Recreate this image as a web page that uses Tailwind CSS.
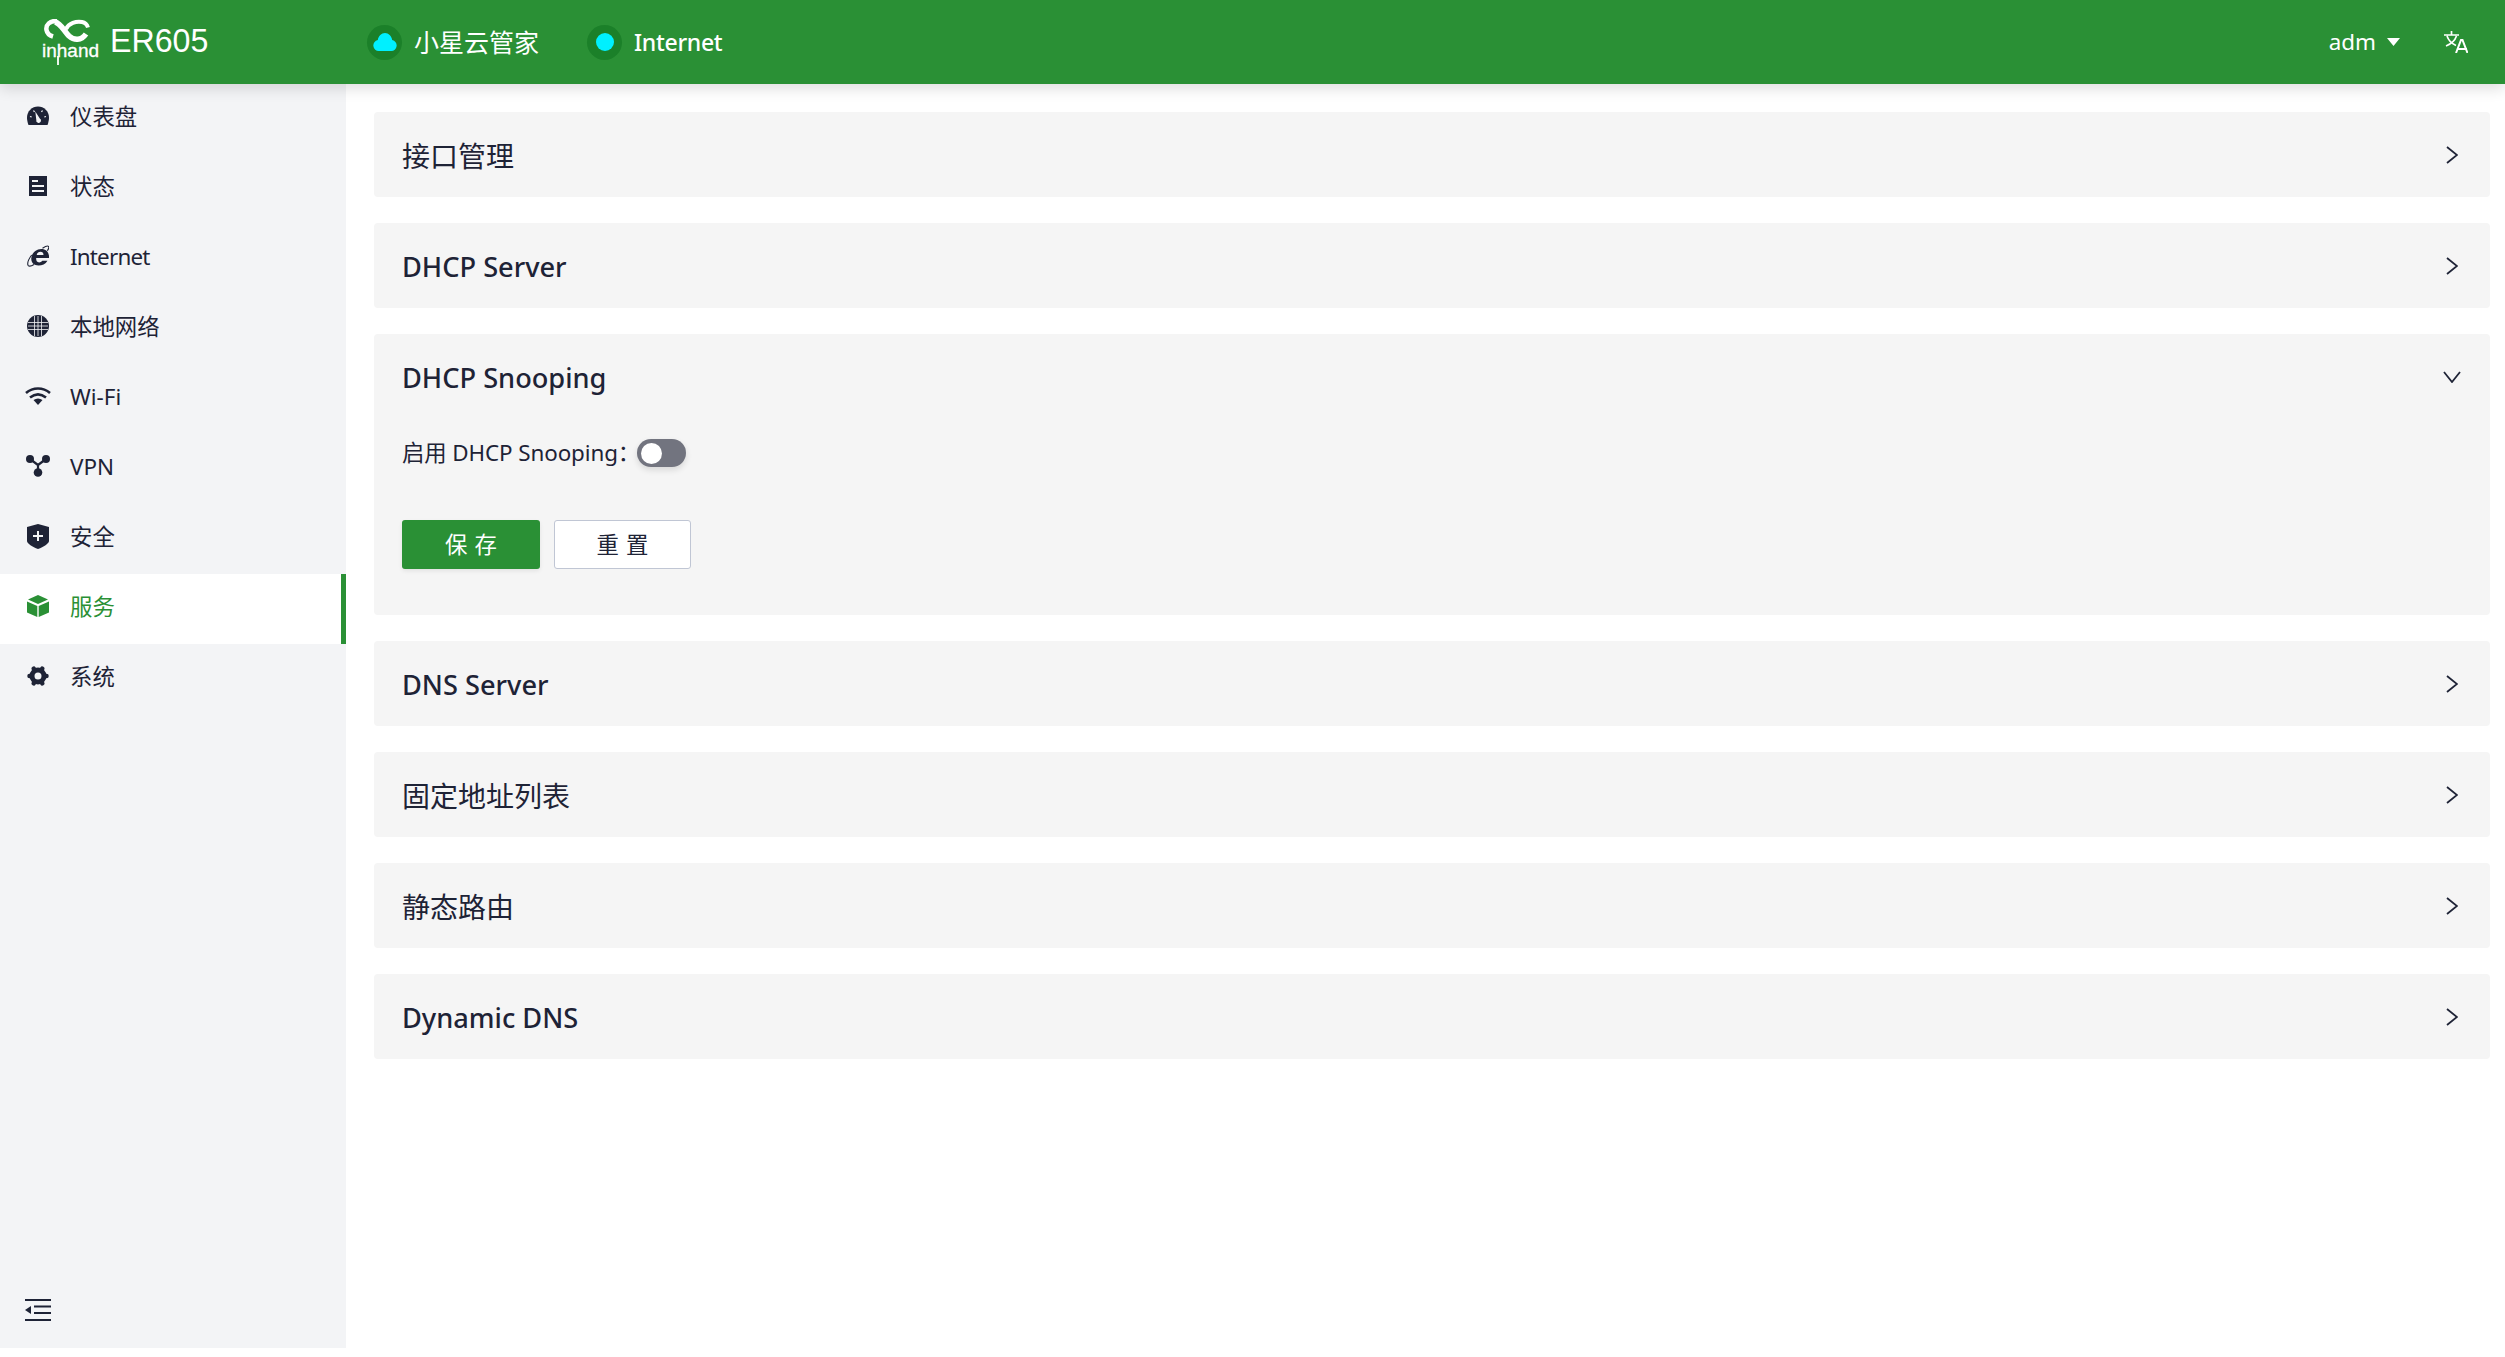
<!DOCTYPE html>
<html lang="zh">

<head>
    <meta charset="UTF-8">
    <title>ER605</title>
    <script src="https://cdn.jsdelivr.net/npm/@tailwindcss/browser@4"></script>
</head>

<body class="bg-white h-[1357px] overflow-hidden text-[#1e2336] font-['Noto_Sans','Noto_Sans_CJK_SC',sans-serif]">

    <!-- Header -->
    <header class="relative z-10 h-[84px] bg-[#2a9035] text-white flex items-center shadow-[0_4px_14px_rgba(0,0,0,0.14)]">
        <div class="w-[367px] pl-[42px] flex items-center shrink-0">
            <!-- Logo -->
            <svg class="w-[58px] h-[48px] mt-[2px]" viewBox="0 0 58 48" fill="none" stroke="currentColor">
                <path d="M15 2C8 1.500 3.500 6 4.500 11c.6 3.400 3.200 5.500 6.500 6.500" stroke-width="4.500" />
                <path d="M13 3c6 1.500 9 9 14 14 5 4.500 12 5 17-2" stroke-width="5.500" />
                <path d="M24 10c3-6 10-8 16-7 3 .6 5 2.400 6 5.500" stroke-width="4" />
                <text x="0" y="38" font-family="Liberation Sans" font-size="19" fill="currentColor" stroke="currentColor" stroke-width="0.300">inhand</text>
                <path d="M16 37v9" stroke-width="1.800" />
            </svg>
            <span class="text-[33.500px] leading-none font-['Liberation_Sans'] ml-[10px] -mt-[3px] inline-block origin-left scale-x-[0.96]">ER605</span>
        </div>

        <div class="flex items-center gap-[12px]">
            <span class="w-[35px] h-[35px] rounded-full bg-[#1b8029] flex items-center justify-center">
                <svg class="w-[24px] h-[18px]" viewBox="0 0 24 18" fill="#00f0ff"><path d="M6 18a5.500 5.500 0 0 1-1.200-10.900C5.500 3 8.400 0 12 0s6.500 3 7.200 7.100A5.500 5.500 0 0 1 18 18Z" /></svg>
            </span>
            <span class="text-[25px] leading-none">小星云管家</span>
        </div>
        <div class="flex items-center gap-[12px] ml-[48px]">
            <span class="w-[35px] h-[35px] rounded-full bg-[#1b8029] flex items-center justify-center">
                <span class="w-[18px] h-[18px] rounded-full bg-[#00f0ff]"></span>
            </span>
            <span class="text-[23px] leading-none font-medium tracking-[-0.3px]">Internet</span>
        </div>

        <div class="ml-auto flex items-center">
            <span class="text-[22.400px] leading-none">adm</span>
            <svg class="w-[13px] h-[8px] ml-[11px]" viewBox="0 0 13 8" fill="currentColor"><path d="M0 0h13L6.500 8Z" /></svg>
            <svg class="w-[24px] h-[22px] ml-[44px] mr-[37px]" viewBox="0 0 24 22" fill="none" stroke="currentColor" stroke-width="1.700">
                <path d="M0 4h15M7.500 0v4M3 5c1.500 4.500 4.500 7.500 9 9.500M12.500 5C11 9.500 7 13 2 15" />
                <path d="M12 22l5-13h1.500l5 13M14 18h9" stroke-width="2" />
            </svg>
        </div>
    </header>

    <div class="flex">
        <!-- Sidebar -->
        <aside class="w-[346px] h-[1264px] bg-[#f3f4f6] flex flex-col shrink-0">
            <nav class="text-[22.400px]">
                <a class="h-[70px] pb-[4px] flex items-center pl-[27px] gap-[21px]">
                    <svg class="w-[22px] h-[22px] -translate-y-px" viewBox="0 0 22 22"><path fill="#1e2336" d="M11 1.500C5 1.500 0 6.300 0 12.500c0 2.500.6 5 1.500 7.500h19c.9-2.500 1.500-5 1.500-7.500C22 6.300 17 1.500 11 1.500Z" /><path stroke="#f3f4f6" stroke-width="1.300" d="M6.500 5.500l1 1.500M15.500 5.500l-1 1.500M3 11.500l1.700.5M19 11.500l-1.700.5" /><path fill="#f3f4f6" d="M8.300 6.500l4.500 7a2.400 2.400 0 1 1-3.500 1.500Z" /></svg>
                    <span>仪表盘</span>
                </a>
                <a class="h-[70px] pb-[4px] flex items-center pl-[29px] gap-[23px]">
                    <svg class="w-[18px] h-[20px] -translate-y-px" viewBox="0 0 18 20"><path fill="#1e2336" d="M0 0h18v20H0Z" /><path stroke="#f3f4f6" stroke-width="2" d="M3 5h6M3 10h12M3 15h12" /></svg>
                    <span>状态</span>
                </a>
                <a class="h-[70px] pb-[4px] flex items-center pl-[27px] gap-[21px]">
                    <svg class="w-[22px] h-[22px] -translate-y-px" viewBox="0 0 22 22" fill="none"><path fill="#1e2336" d="M22 13c.5-5.500-3-9-7.800-9C9.200 4 4.800 8 4.300 13c-.4 4.500 2.700 7.500 7.200 7.500 3.700 0 7-1.500 9-4.800h-5.200c-.9 1.200-2 1.700-3.200 1.700-2 0-3.200-1.500-2.900-4.400ZM9.700 10c.4-2 2-3.200 3.800-3.200s3 1.200 3 3.200Z" /><path stroke="#1e2336" stroke-width="1.100" d="M15.500 3.300c3-2 5.300-2.700 6-2 .7.800.2 2.500-1.200 4.500M4.700 10C1.700 14 .2 18 1 20.200c.9 1.300 3.500.9 6-.7" /></svg>
                    <span class="tracking-[-0.800px]">Internet</span>
                </a>
                <a class="h-[70px] pb-[4px] flex items-center pl-[27px] gap-[21px]">
                    <svg class="w-[22px] h-[22px] -translate-y-px" viewBox="0 0 22 22"><circle cx="11" cy="11" r="11" fill="#1e2336" /><path stroke="#f3f4f6" d="M1 7.500h20M1 14.500h20M7.500 1v20M14.500 1v20M11 1v20M1 11h20" stroke-width="0.800" fill="none" /></svg>
                    <span>本地网络</span>
                </a>
                <a class="h-[70px] pb-[4px] flex items-center pl-[25px] gap-[19px]">
                    <svg class="w-[26px] h-[18px] -translate-y-px" viewBox="0 0 26 18" fill="none" stroke="#1e2336" stroke-width="2.600"><path d="M1 6c7-6 17-6 24 0M5 10.500c5-4 11-4 16 0" /><path fill="#1e2336" stroke="none" d="M8.500 13c3-2 6-2 9 0L13 18Z" /></svg>
                    <span>Wi-Fi</span>
                </a>
                <a class="h-[70px] pb-[4px] flex items-center pl-[26px] gap-[20px]">
                    <svg class="w-[24px] h-[22px] -translate-y-px" viewBox="0 0 24 22" fill="#1e2336"><circle cx="4" cy="4" r="4" /><circle cx="20" cy="4" r="4" /><circle cx="12" cy="17.500" r="4.300" /><path stroke="#1e2336" stroke-width="2.200" fill="none" d="M4 4l8 6 8-6M12 10v7" /></svg>
                    <span>VPN</span>
                </a>
                <a class="h-[70px] pb-[4px] flex items-center pl-[27px] gap-[21px]">
                    <svg class="w-[22px] h-[25px] -translate-y-px" viewBox="0 0 22 25"><path fill="#1e2336" d="M11 0 22 3v14c0 2.500-5.500 6-11 8C5.500 23 0 19.500 0 17V3Z" /><path stroke="#f3f4f6" stroke-width="2" d="M11 7v10M6 12h10" /></svg>
                    <span>安全</span>
                </a>
                <!-- active item -->
                <a class="h-[70px] pb-[4px] flex items-center pl-[27px] gap-[21px] bg-white border-r-[5px] border-[#2a9035] text-[#2a9035]">
                    <svg class="w-[22px] h-[22px] -translate-y-px" viewBox="0 0 22 22" fill="#2a9035"><path d="M11 0 21 4.500 11 9 1 4.500Z" /><path d="M0 6.500 10.300 11v11L0 17.500ZM22 6.500 11.700 11v11L22 17.500Z" /></svg>
                    <span>服务</span>
                </a>
                <a class="h-[70px] pb-[4px] flex items-center pl-[27px] gap-[21px]">
                    <svg class="w-[22px] h-[22px] -translate-y-px" viewBox="0 0 22 22" fill="none" stroke="#1e2336"><circle cx="11" cy="11" r="6" stroke-width="5" /><path stroke-width="4.500" stroke-linecap="round" d="M19.500 11h-2M15.300 3.600l-1 1.700M6.700 3.600l1 1.700M2.500 11h2M6.700 18.400l1-1.700M15.300 18.400l-1-1.700" /></svg>
                    <span>系统</span>
                </a>
            </nav>
            <div class="mt-auto pl-[25px] pb-[27px]">
                <svg class="block w-[26px] h-[22px]" viewBox="0 0 26 22" fill="#1e2336"><path d="M0 0h26v2H0ZM9 6.500h17v2H9ZM9 13h17v2H9ZM0 20h26v2H0ZM6 7v8l-6-4Z" /></svg>
            </div>
        </aside>

        <!-- Collapse panels -->
        <main class="flex-1 pl-[28px] pr-[15px] pt-[28px] flex flex-col gap-[26px]">
            <section class="h-[85px] bg-[#f5f5f5] rounded-[4px] pl-[28px] pr-[32px] flex items-center justify-between">
                <h2 class="text-[28px] pt-[2px]">接口管理</h2>
                <svg class="w-[12px] h-[18px]" viewBox="0 0 12 18" fill="none" stroke="#1e2336" stroke-width="1.800"><path d="M1 1l10 8-10 8" /></svg>
            </section>
            <section class="h-[85px] bg-[#f5f5f5] rounded-[4px] pl-[28px] pr-[32px] flex items-center justify-between">
                <h2 class="text-[27.200px] font-medium pt-[3px]">DHCP Server</h2>
                <svg class="w-[12px] h-[18px]" viewBox="0 0 12 18" fill="none" stroke="#1e2336" stroke-width="1.800"><path d="M1 1l10 8-10 8" /></svg>
            </section>
            <section class="h-[281px] bg-[#f5f5f5] rounded-[4px] pl-[28px] pr-[29px]">
                <div class="h-[85px] flex items-center justify-between">
                    <h2 class="text-[27.200px] font-medium pt-[3px]">DHCP Snooping</h2>
                    <svg class="w-[18px] h-[12px]" viewBox="0 0 18 12" fill="none" stroke="#1e2336" stroke-width="1.800"><path d="M1 1l8 10 8-10" /></svg>
                </div>
                <div class="flex items-center h-[28px] mt-[20px] text-[22.400px]">
                    <span class="tracking-[-0.100px]">启用 DHCP Snooping：</span>
                    <span class="-ml-[3px] w-[49px] h-[28px] rounded-full bg-[#72747f] p-[4px] shadow-[0_3px_6px_rgba(0,0,0,0.12)]">
                        <span class="block w-[21px] h-[21px] rounded-full bg-white"></span>
                    </span>
                </div>
                <div class="flex gap-[14px] mt-[53px]">
                    <button class="w-[138px] h-[49px] pl-[7px] bg-[#2a9035] text-white rounded-[3px] text-[22.400px] tracking-[7px] shadow-[0_2px_4px_rgba(0,0,0,0.08)]">保存</button>
                    <button class="w-[137px] h-[49px] pl-[7px] bg-white border border-[#c0c6d4] rounded-[3px] text-[22.400px] tracking-[7px]">重置</button>
                </div>
            </section>
            <section class="h-[85px] bg-[#f5f5f5] rounded-[4px] pl-[28px] pr-[32px] flex items-center justify-between">
                <h2 class="text-[27.200px] font-medium pt-[3px]">DNS Server</h2>
                <svg class="w-[12px] h-[18px]" viewBox="0 0 12 18" fill="none" stroke="#1e2336" stroke-width="1.800"><path d="M1 1l10 8-10 8" /></svg>
            </section>
            <section class="h-[85px] bg-[#f5f5f5] rounded-[4px] pl-[28px] pr-[32px] flex items-center justify-between">
                <h2 class="text-[28px] pt-[2px]">固定地址列表</h2>
                <svg class="w-[12px] h-[18px]" viewBox="0 0 12 18" fill="none" stroke="#1e2336" stroke-width="1.800"><path d="M1 1l10 8-10 8" /></svg>
            </section>
            <section class="h-[85px] bg-[#f5f5f5] rounded-[4px] pl-[28px] pr-[32px] flex items-center justify-between">
                <h2 class="text-[28px] pt-[2px]">静态路由</h2>
                <svg class="w-[12px] h-[18px]" viewBox="0 0 12 18" fill="none" stroke="#1e2336" stroke-width="1.800"><path d="M1 1l10 8-10 8" /></svg>
            </section>
            <section class="h-[85px] bg-[#f5f5f5] rounded-[4px] pl-[28px] pr-[32px] flex items-center justify-between">
                <h2 class="text-[27.200px] font-medium pt-[3px]">Dynamic DNS</h2>
                <svg class="w-[12px] h-[18px]" viewBox="0 0 12 18" fill="none" stroke="#1e2336" stroke-width="1.800"><path d="M1 1l10 8-10 8" /></svg>
            </section>
        </main>
    </div>
</body>

</html>
